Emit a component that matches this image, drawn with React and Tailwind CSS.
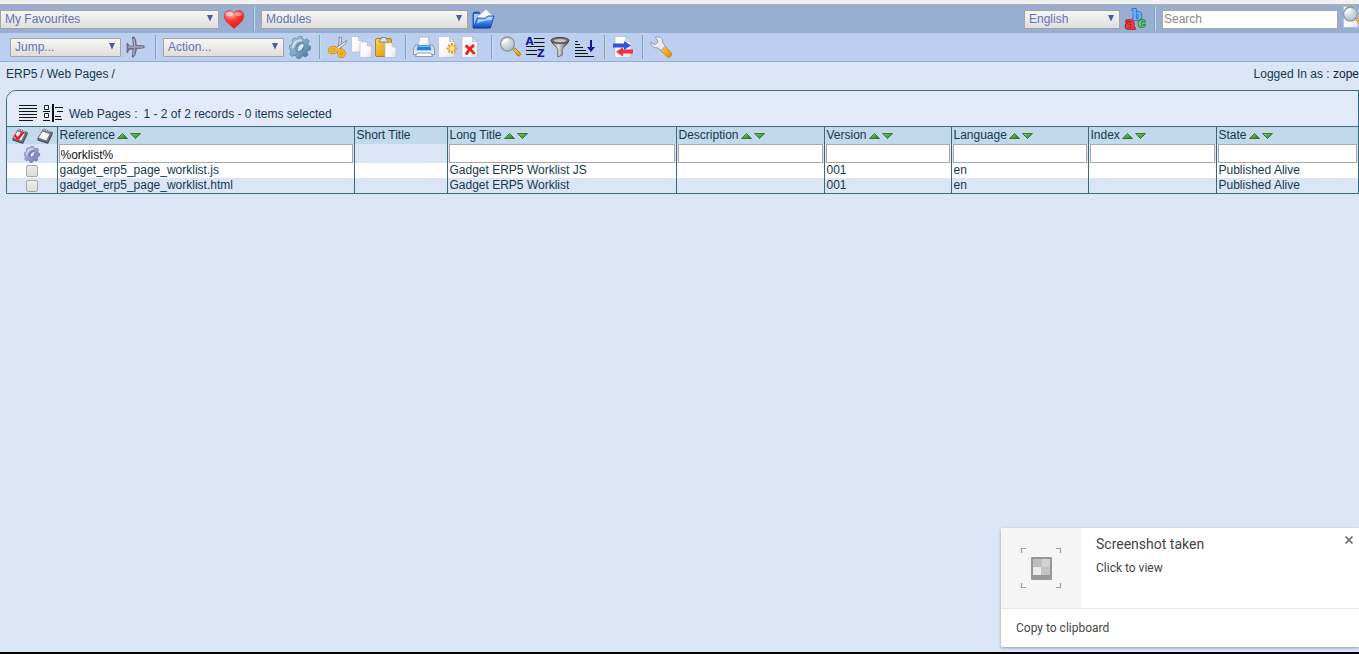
import React from "react";

const Svg = ({ children, className = "size-[22px]", box = "0 0 22 22" }) => (
  <svg viewBox={box} className={`block shrink-0 overflow-visible ${className}`} aria-hidden="true">
    {children}
  </svg>
);

const Gradients = () => (
  <svg className="absolute size-0" aria-hidden="true">
    <defs>
      <radialGradient id="heart" cx="35%" cy="20%" r="85%">
        <stop offset="0" stopColor="#ffb9b0" />
        <stop offset=".45" stopColor="#ff3a34" />
        <stop offset="1" stopColor="#e20d10" />
      </radialGradient>
      <linearGradient id="steel" x1="0" y1="0" x2="1" y2="1">
        <stop offset="0" stopColor="#b5cfe6" />
        <stop offset=".5" stopColor="#7fa5c8" />
        <stop offset="1" stopColor="#456a92" />
      </linearGradient>
      <linearGradient id="lilac" x1="0" y1="0" x2="1" y2="1">
        <stop offset="0" stopColor="#c4c8ee" />
        <stop offset="1" stopColor="#6c70b0" />
      </linearGradient>
      <linearGradient id="paper" x1="0" y1="0" x2="1" y2="1">
        <stop offset="0" stopColor="#ffffff" />
        <stop offset=".6" stopColor="#f8f8fc" />
        <stop offset="1" stopColor="#dcdcea" />
      </linearGradient>
      <linearGradient id="blue" x1="0" y1="0" x2="0" y2="1">
        <stop offset="0" stopColor="#8fc4fb" />
        <stop offset=".5" stopColor="#3a86ea" />
        <stop offset="1" stopColor="#1242b4" />
      </linearGradient>
      <linearGradient id="gold" x1="0" y1="0" x2="1" y2="1">
        <stop offset="0" stopColor="#ffd458" />
        <stop offset="1" stopColor="#d98a06" />
      </linearGradient>
      <linearGradient id="metal" x1="0" y1="0" x2="1" y2="0">
        <stop offset="0" stopColor="#555555" />
        <stop offset=".4" stopColor="#e2e2e2" />
        <stop offset="1" stopColor="#3c3c3c" />
      </linearGradient>
      <radialGradient id="glass" cx="35%" cy="30%" r="75%">
        <stop offset="0" stopColor="#f0f5f7" />
        <stop offset="1" stopColor="#a9bcc6" />
      </radialGradient>
      <linearGradient id="green" x1="0" y1="0" x2="1" y2="1">
        <stop offset="0" stopColor="#7fe05a" />
        <stop offset="1" stopColor="#127a12" />
      </linearGradient>
    </defs>
  </svg>
);

const Heart = () => (
  <Svg>
    <path d="M11 20.500C7.500 17 1.200 13.500 1.200 8 1.200 4.500 3.500 2.600 6.200 2.600 8.500 2.600 10.200 3.600 11 5.200 11.800 3.600 13.500 2.600 15.800 2.600c2.700 0 5 1.900 5 5.400C20.800 13.500 14.500 17 11 20.500z" fill="url(#heart)" stroke="#d3393c" strokeWidth=".6" />
    <ellipse cx="6.500" cy="6" rx="3.800" ry="2.200" fill="#fff" opacity=".45" />
    <ellipse cx="15.500" cy="6" rx="3.600" ry="2" fill="#fff" opacity=".4" />
  </Svg>
);

const Folder = () => (
  <Svg>
    <path d="M1 6l1-2h5l1 2h8v14H1z" fill="#2b6ddb" stroke="#1b3fae" strokeWidth=".8" />
    <path d="M2 6h5l-4 12H2z" fill="#a5d3fb" />
    <path d="M6 8l8-6.500 6 6v6H6z" fill="url(#paper)" stroke="#b9c3dd" strokeWidth=".6" />
    <path d="M5 10l8 .2 3-2.200h6l-3.500 12H1.500z" fill="url(#blue)" stroke="#1a3fb0" strokeWidth=".8" />
    <path d="M6 11.500l7.500-.2 3-2.200h4l-1 3c-5 .2-10 1-14.500 3.500z" fill="#cfe8ff" opacity=".75" />
  </Svg>
);

const Plane = () => (
  <Svg>
    <path d="M7.400 1h1.800c1.600 2.500 2 5.500 2.100 8.300l7 .5c1.600.2 1.600 1.800 0 2.100l-6.800.8c-.5 4.300-1.700 7.500-3.200 8.300H7.200l.9-7.800-4.300.2-1 3H1.900l.3-3.500-.7-.9.700-.8-.3-3.700h1l1.500 2.400 4 .2z" fill="#77778c" stroke="#50506a" strokeWidth=".6" />
    <path d="M8.700 2.500l1 7.500M3 11h15M9.400 12.500l-.8 6.500" stroke="#c6c6d6" strokeWidth=".9" fill="none" />
  </Svg>
);

const gearPath =
  "M9.200.8l3.700-.2.8 2.500 1.900.8 2.400-1.200 2.200 2.500-1.300 2.300.6 1.900 2.200 1-.2 3.300-2.400.9-.9 1.900 1 2.400-2.600 2.200-2.300-1.200-1.900.6-1 2.100-3.300-.1-.9-2.300-1.900-.8-2.400 1L.8 18l1.200-2.300-.6-1.900L.4 12.500.6 9.300 3 8.400l.8-1.900-.9-2.400L5.400 2l2.200 1.100z";

const Gear = ({ fill = "url(#steel)", stroke = "#5b7ea5", className }) => (
  <Svg className={className}>
    <path d={gearPath} fill={fill} stroke={stroke} strokeWidth=".7" />
    <path d="M4 12c0-5 4-8.500 9-7.500" fill="none" stroke="#fff" strokeWidth="1.800" opacity=".6" />
    <ellipse cx="11" cy="11" rx="3.400" ry="5" transform="rotate(38 11 11)" fill="#dfe9f6" stroke={stroke} strokeWidth="1.200" />
    <path d="M8.300 14.500c-.8-3 1.500-7 5-7.300" fill="none" stroke={stroke} strokeWidth="1.800" opacity=".8" />
  </Svg>
);

const Scissors = () => (
  <Svg>
    <path d="M12.300 1l2.200.5-.6 11.500-2.400 1z" fill="#e8e8ee" stroke="#77778f" strokeWidth=".8" />
    <path d="M19.500 4.500L9.500 11.500l1.500 2.400 7.500-6.400z" fill="#f2f2f6" stroke="#77778f" strokeWidth=".8" />
    <ellipse cx="6" cy="14" rx="3.600" ry="2.500" transform="rotate(-12 6 14)" fill="none" stroke="#b87708" strokeWidth="3.400" />
    <ellipse cx="6" cy="14" rx="3.600" ry="2.500" transform="rotate(-12 6 14)" fill="none" stroke="#fbb51e" strokeWidth="2.400" />
    <ellipse cx="14.500" cy="17.300" rx="2.400" ry="3.100" fill="none" stroke="#b87708" strokeWidth="3.400" />
    <ellipse cx="14.500" cy="17.300" rx="2.400" ry="3.100" fill="none" stroke="#fbb51e" strokeWidth="2.400" />
    <path d="M9 12.800l4 1.500" stroke="#fbb51e" strokeWidth="2.600" />
  </Svg>
);

const Sheet = ({ d, fold }) => (
  <>
    <path d={d} fill="url(#paper)" stroke="#b2b6ca" strokeWidth=".6" />
    <path d={fold} fill="#dcdce8" stroke="#a9aec6" strokeWidth=".6" />
  </>
);

const Copy = () => (
  <Svg>
    <Sheet d="M.5.500h7l4 4v11.500H.5z" fold="M7.500.5v4h4z" />
    <Sheet d="M9 6h7.500l4 4v11.500H9z" fold="M16.500 6v4h4z" />
  </Svg>
);

const Paste = () => (
  <Svg>
    <rect x=".5" y="2.500" width="16" height="18" rx="1.500" fill="url(#gold)" stroke="#a06a0c" strokeWidth=".8" />
    <path d="M4.500 6c0-2.500 2-2.200 2.200-4.500h4c.3 2.300 2.300 2 2.300 4.500z" fill="#dfe3ea" stroke="#6f7480" strokeWidth=".8" />
    <Sheet d="M10 7h7l4 4v10.500H10z" fold="M17 7v4h4z" />
  </Svg>
);

const Printer = () => (
  <Svg>
    <path d="M6.500 1h9l1 9h-11z" fill="url(#paper)" stroke="#a3abc4" strokeWidth=".7" />
    <path d="M2.500 9h3l.5 3h10l.5-3h3l2 4v5.500H.5V13z" fill="#d8dde8" stroke="#7d869d" strokeWidth=".8" />
    <path d="M5 9h12l1.500 5.500h-15z" fill="#2484e0" />
    <path d="M5.500 9.500h11l.6 1.500H5z" fill="#6cb8f4" />
    <path d="M1 14.500h20v3.500H1z" fill="#e9ecf3" />
    <path d="M4 17h14l1.500 3.500h-17z" fill="#fff" stroke="#7d869d" strokeWidth=".8" />
  </Svg>
);

const NewDoc = () => (
  <Svg>
    <Sheet d="M1.500.5h11l5 5v16h-16z" fold="M12.500.5v5h5z" />
    <path d="M15 7v11M9.500 12.500h11M11.200 8.700l7.600 7.600M18.800 8.700l-7.600 7.600" stroke="#eaa329" strokeWidth="2" />
    <circle cx="15" cy="12.500" r="2.400" fill="#fff0a0" />
  </Svg>
);

const DeleteDoc = () => (
  <Svg>
    <Sheet d="M1 .5h10.500l5 5v16H1z" fold="M11.500.5v5h5z" />
    <path d="M4.500 9.500c3 2 6.500 5 9 8.500M13 9c-3.500 2.500-6 5.500-8 9.500" fill="none" stroke="#ee2416" strokeWidth="2.800" />
  </Svg>
);

const Lens = () => (
  <>
    <path d="M14 13.500l2-1.500 5.500 5.500c.8 1.200-1.500 3.300-2.700 2.500z" fill="url(#gold)" stroke="#a0650a" strokeWidth=".7" />
    <circle cx="8.500" cy="8" r="7" fill="url(#glass)" stroke="#8f979d" strokeWidth="1.300" />
    <path d="M4 7.500C4.500 5 6.500 3.600 9 3.700" fill="none" stroke="#fff" strokeWidth="1.500" />
  </>
);

const Magnifier = () => (
  <Svg>
    <Lens />
  </Svg>
);

const PageSearch = () => (
  <Svg>
    <Sheet d="M1.500.5h11l4 4v17h-15z" fold="M12.500.5v4h4z" />
    <Lens />
  </Svg>
);

const SortAZ = () => (
  <Svg>
    <path d="M10 2.500h10.500M10 6.500h10.500M2 10.500h18.500M2 14.500h11M2 18.500h11" stroke="#111" strokeWidth="1.200" />
    <text x="1.500" y="8.500" fontFamily="DejaVu Sans" fontWeight="700" fontSize="10.500" fill="#14149c">A</text>
    <text x="13" y="21" fontFamily="DejaVu Sans" fontWeight="700" fontSize="10.500" fill="#14149c">Z</text>
  </Svg>
);

const Funnel = () => (
  <Svg>
    <path d="M2 4.500c1 4 6 6.500 6.800 9V21l4.400-2v-5.500C14 11 19 8.500 20 4.500z" fill="url(#metal)" stroke="#444" strokeWidth=".7" />
    <ellipse cx="11" cy="4.400" rx="9" ry="3" fill="#6e6e6e" stroke="#4a4a4a" strokeWidth="1" />
    <ellipse cx="11" cy="4.600" rx="6.500" ry="1.600" fill="#c4c4c4" />
  </Svg>
);

const SortDown = () => (
  <Svg>
    <path d="M1 5.500h3M1 8.500h5M1 11.500h8M1 14.500h11M1 17.500h13M1 20.500h19" stroke="#111" strokeWidth="1.200" />
    <path d="M17 4v9" stroke="#14149c" strokeWidth="2" />
    <path d="M13 11h8l-4 5z" fill="#14149c" />
  </Svg>
);

const Exchange = () => (
  <Svg>
    <Sheet d="M3 .5h11l5 5v16H3z" fold="M14 .5v5h5z" />
    <path d="M1 7.500h11V5l7 4.500-7 4.500v-2.500H1z" fill="#2b55e8" />
    <path d="M21 13.500H11V11l-7 4.800 7 4.700v-3h10z" fill="#ef3340" />
  </Svg>
);

const Wrench = () => (
  <Svg>
    <path d="M12 11.500l2.500-2.300 7 8c1.200 2-2 5-4.200 3.800L10 14z" fill="url(#gold)" stroke="#c27b0c" strokeWidth=".7" />
    <path d="M5.500 1c3.500-1.300 7.800 1 7.200 5.500l2.600 3.700-4.200 4.200-3.700-2.600C4 12.500.4 9.600.8 6.200l4.200 2.400L8 6z" fill="#e8eaf1" stroke="#8a90a6" strokeWidth=".9" />
  </Svg>
);

const Letters = () => (
  <Svg>
    <g fontFamily="DejaVu Serif" fontWeight="700" strokeWidth="1.600" paintOrder="stroke">
      <text x="8" y="12" fontSize="14" fill="#6fb4f6" stroke="#1f66c4">b</text>
      <text x="1" y="20.500" fontSize="16" fill="#f0383a" stroke="#b01418">a</text>
      <text x="14" y="19" fontSize="12" fill="#6ad060" stroke="#1a7a2a">c</text>
    </g>
  </Svg>
);

const FlatList = () => (
  <Svg className="h-[17px] w-[18px]" box="0 0 18 17">
    <path d="M0 .5h18M0 3.500h18M0 6.500h18M0 9.500h18M0 12.500h18M0 15.500h14" stroke="#111" />
  </Svg>
);

const TreeList = () => (
  <Svg className="h-[18px] w-5" box="0 0 20 18">
    <path d="M1.500 1.500h4v4h-4zM1.500 9.500h4v4h-4z" fill="#fff" stroke="#222" />
    <path d="M0 7.500h7M0 16.500h7M12 3.500h8M14 7.500h6M12 12.500h6M12 15.500h7" stroke="#111" />
    <path d="M10 0v18" stroke="#111" strokeWidth="2" />
  </Svg>
);

const Pad = ({ checked }) => (
  <Svg className="size-4" box="0 0 16 16">
    <path d="M6.500 1l9 3.500L10.500 14.500.5 11z" fill="#6f6f7e" stroke="#5d5d6a" strokeWidth=".8" />
    <path d="M10.500 14.500l5-10v2.300L11 16 .5 12.500V11z" fill="#4c4c5a" />
    <path d="M5.500 3.500l7 2.500-3.200 6.500-7.500-2.800z" fill="#f4f4f9" />
    <path d="M6.500 1l1 1.800M9 1.800l1 1.800M11.500 2.600l1 1.800" stroke="#dedee8" />
    {checked && <path d="M2.500 7l3.500 4 5-7" fill="none" stroke="#f01818" strokeWidth="2.600" />}
  </Svg>
);

const Tool = ({ label, children }) => (
  <button type="button" aria-label={label} title={label} className="shrink-0 cursor-pointer">
    {children}
  </button>
);

const Divider = () => (
  <span className="mr-1.5 ml-2 h-6 w-0.5 shrink-0 border-r border-l border-r-[#c4dbea] border-l-[#7ba2bf]" />
);

const Picker = ({ label, width }) => (
  <span className={`relative block shrink-0 ${width}`}>
    <select
      aria-label={label}
      className="block h-[19px] w-full appearance-none rounded-[1px] border border-[#a3a3a3] bg-linear-to-b from-[#f6f6f6] to-[#dedede] pl-1 text-[12px] leading-[16px] text-[#6473b4]"
    >
      <option>{label}</option>
    </select>
    <svg viewBox="0 0 6 7" className="pointer-events-none absolute top-[5px] right-1.5 h-[7px] w-1.5" aria-hidden="true">
      <path d="M0 0h6L3 6.500z" fill="#4a5ea0" />
    </svg>
  </span>
);

const columns = [
  { name: "Reference", width: "w-[297px]", sort: true, filter: "%orklist%" },
  { name: "Short Title", width: "w-[93px]", sort: false },
  { name: "Long Title", width: "w-[229px]", sort: true, filter: "" },
  { name: "Description", width: "w-[148px]", sort: true, filter: "" },
  { name: "Version", width: "w-[127px]", sort: true, filter: "" },
  { name: "Language", width: "w-[137px]", sort: true, filter: "" },
  { name: "Index", width: "w-[128px]", sort: true, filter: "" },
  { name: "State", width: "w-[142px]", sort: true, filter: "" },
];

const rows = [
  ["gadget_erp5_page_worklist.js", "", "Gadget ERP5 Worklist JS", "", "001", "en", "", "Published Alive"],
  ["gadget_erp5_page_worklist.html", "", "Gadget ERP5 Worklist", "", "001", "en", "", "Published Alive"],
];

const SortArrows = ({ name }) => (
  <>
    <button type="button" aria-label={`Sort ${name} ascending`} className="ml-0.5">
      <Svg className="h-1.5 w-[11px]" box="0 0 11 6">
        <path d="M.5 5.500L5.500.5l5 5z" fill="url(#green)" stroke="#2c5a2c" strokeWidth=".8" />
      </Svg>
    </button>
    <button type="button" aria-label={`Sort ${name} descending`} className="ml-0.5">
      <Svg className="h-1.5 w-[11px]" box="0 0 11 6">
        <path d="M.5.5h10l-5 5z" fill="url(#green)" stroke="#2c5a2c" strokeWidth=".8" />
      </Svg>
    </button>
  </>
);

const cell = "border-l border-[#3b6a7c] p-0";

export default function App() {
  return (
    <div className="relative flex min-h-screen flex-col overflow-hidden border-b-2 border-black bg-[#dae6f6] font-['Liberation_Sans',Arial,sans-serif] text-[12px] text-[#16384b]">
      <Gradients />
      <div className="h-[5px] border-b border-[#b0b0b0] bg-[#f1f1f1]" />

      <header>
        <div className="flex h-7 items-center bg-[#97aed1]">
          <div className="flex items-center gap-1">
            <Picker label="My Favourites" width="w-[219px]" />
            <Tool label="Go to favourite"><Heart /></Tool>
          </div>
          <Divider />
          <div className="flex items-center gap-1">
            <Picker label="Modules" width="w-[207px]" />
            <Tool label="Open module"><Folder /></Tool>
          </div>
          <div className="ml-auto flex items-center gap-1">
            <Picker label="English" width="w-[96px]" />
            <Tool label="Change language"><Letters /></Tool>
          </div>
          <Divider />
          <div className="flex items-center gap-1">
            <input
              type="text"
              aria-label="Search"
              placeholder="Search"
              className="h-[19px] w-[176px] border border-[#a9a9a9] bg-white pl-px text-[12px] placeholder:text-[#8a8a8a]"
            />
            <div className="w-[17px] overflow-hidden">
              <Tool label="Run search"><PageSearch /></Tool>
            </div>
          </div>
        </div>

        <div className="flex h-[29px] items-center border-b border-[#93add6] bg-[#bccfef] pl-2.5">
          <div className="flex items-center gap-1">
            <Picker label="Jump..." width="w-[111px]" />
            <Tool label="Jump"><Plane /></Tool>
          </div>
          <Divider />
          <div className="flex items-center gap-[5px]">
            <Picker label="Action..." width="w-[121px]" />
            <Tool label="Run action"><Gear /></Tool>
          </div>
          <Divider />
          <div className="flex items-center gap-0.5">
            <Tool label="Cut"><Scissors /></Tool>
            <Tool label="Copy"><Copy /></Tool>
            <Tool label="Paste"><Paste /></Tool>
          </div>
          <Divider />
          <div className="flex items-center gap-0.5">
            <Tool label="Print"><Printer /></Tool>
            <Tool label="New"><NewDoc /></Tool>
            <Tool label="Delete"><DeleteDoc /></Tool>
          </div>
          <Divider />
          <div className="flex items-center gap-[3px]">
            <Tool label="Find"><Magnifier /></Tool>
            <Tool label="Sort"><SortAZ /></Tool>
            <Tool label="Filter"><Funnel /></Tool>
            <Tool label="Configure sort"><SortDown /></Tool>
          </div>
          <Divider />
          <Tool label="Import / Export"><Exchange /></Tool>
          <Divider />
          <Tool label="Configure"><Wrench /></Tool>
        </div>
      </header>

      <nav className="mb-1 flex h-6 items-center justify-between pl-1.5">
        <div className="flex gap-[3px]">
          <a href="#erp5">ERP5</a>
          <span>/</span>
          <a href="#web-pages">Web Pages</a>
          <span>/</span>
        </div>
        <div>
          Logged In as : <span className="text-[#102030]">zope</span>
        </div>
      </nav>

      <main className="ml-1.5 overflow-hidden rounded-tl-[10px] border border-[#3b6a7c]">
        <div className="flex h-9 items-end gap-1.5 border-b border-[#3b6a7c] bg-[#e3eafa] pb-1 pl-3 leading-[16px]">
          <Tool label="Flat view"><FlatList /></Tool>
          <Tool label="Tree view"><TreeList /></Tool>
          <a href="#web-pages">Web Pages :</a>
          <span>1 - 2 of 2 records - 0 items selected</span>
        </div>
        <table className="w-full table-fixed border-collapse text-left leading-[15px]">
          <colgroup>
            <col className="w-[50px]" />
            {columns.map((c) => (
              <col key={c.name} className={c.width} />
            ))}
          </colgroup>
          <thead>
            <tr className="h-[17px] bg-[#c1d9eb]">
              <th className="p-0">
                <div className="flex justify-between pr-1 pl-[5px]">
                  <Tool label="Select all"><Pad checked /></Tool>
                  <Tool label="Deselect all"><Pad /></Tool>
                </div>
              </th>
              {columns.map((c) => (
                <th key={c.name} className={`${cell} pl-0.5 font-normal`}>
                  <div className="flex items-center">
                    {c.name}
                    {c.sort && <SortArrows name={c.name} />}
                  </div>
                </th>
              ))}
            </tr>
            <tr className="h-[19px]">
              <td className="p-0">
                <div className="flex justify-center">
                  <Tool label="Apply filter">
                    <Gear fill="url(#lilac)" stroke="#6367a3" className="size-4" />
                  </Tool>
                </div>
              </td>
              {columns.map((c) => (
                <td key={c.name} className={`${cell} px-px`}>
                  {c.sort && (
                    <input
                      type="text"
                      aria-label={`Filter ${c.name}`}
                      defaultValue={c.filter}
                      className="block h-[19px] w-full border border-[#a9a9a9] bg-white pt-0.5 pl-px text-[12px] text-[#101010]"
                    />
                  )}
                </td>
              ))}
            </tr>
          </thead>
          <tbody>
            {rows.map((row) => (
              <tr key={row[0]} className="h-[15px] odd:bg-white even:bg-[#dae6f6]">
                <td className="p-0">
                  <input
                    type="checkbox"
                    aria-label={`Select ${row[0]}`}
                    className="mx-auto block size-3 appearance-none rounded-[2px] border border-[#a8a8a8] bg-linear-to-b from-[#ececec] to-[#dcdcdc]"
                  />
                </td>
                {row.map((text, i) => (
                  <td key={columns[i].name} className={`${cell} pl-0.5 whitespace-nowrap`}>
                    {text}
                  </td>
                ))}
              </tr>
            ))}
          </tbody>
        </table>
      </main>

      <aside className="absolute right-0 bottom-[5px] w-[358px] rounded-l-[2px] bg-white font-[Roboto,sans-serif] text-[12px] text-[#444] shadow-[0_1px_3px_rgba(0,0,0,0.35)]">
        <div className="flex h-[81px] border-b border-[#e6e6e6]">
          <div className="flex w-20 items-center justify-center bg-[#f5f5f5]">
            <Svg className="size-10" box="0 0 40 40">
              <path d="M.5 5V.5H5M35 .5h4.500V5M.5 35v4.500H5M35 39.500h4.500V35" fill="none" stroke="#a0a0a0" strokeWidth="1.200" />
              <rect x="10" y="9" width="21" height="23" rx="1" fill="#979797" />
              <path d="M12 11h8.500v8H12z" fill="#bdbdbd" />
              <path d="M20.500 11H29v8h-8.500z" fill="#d3d3d3" />
              <path d="M12 19h8.500v8H12z" fill="#ebebeb" />
              <path d="M20.500 19H29v8h-8.500z" fill="#c4c4c4" />
            </Svg>
          </div>
          <div className="flex-1 pt-2 pl-[15px]">
            <div className="text-[14px] leading-4">Screenshot taken</div>
            <div className="mt-2 leading-4">Click to view</div>
          </div>
          <button type="button" aria-label="Close" className="mt-2 mr-1.5 self-start">
            <Svg className="size-2" box="0 0 8 8">
              <path d="M.5.5l7 7M7.500.5l-7 7" stroke="#6a6a6a" strokeWidth="1.700" />
            </Svg>
          </button>
        </div>
        <button type="button" className="block h-[38px] w-full pl-[15px] text-left">
          Copy to clipboard
        </button>
      </aside>
    </div>
  );
}
